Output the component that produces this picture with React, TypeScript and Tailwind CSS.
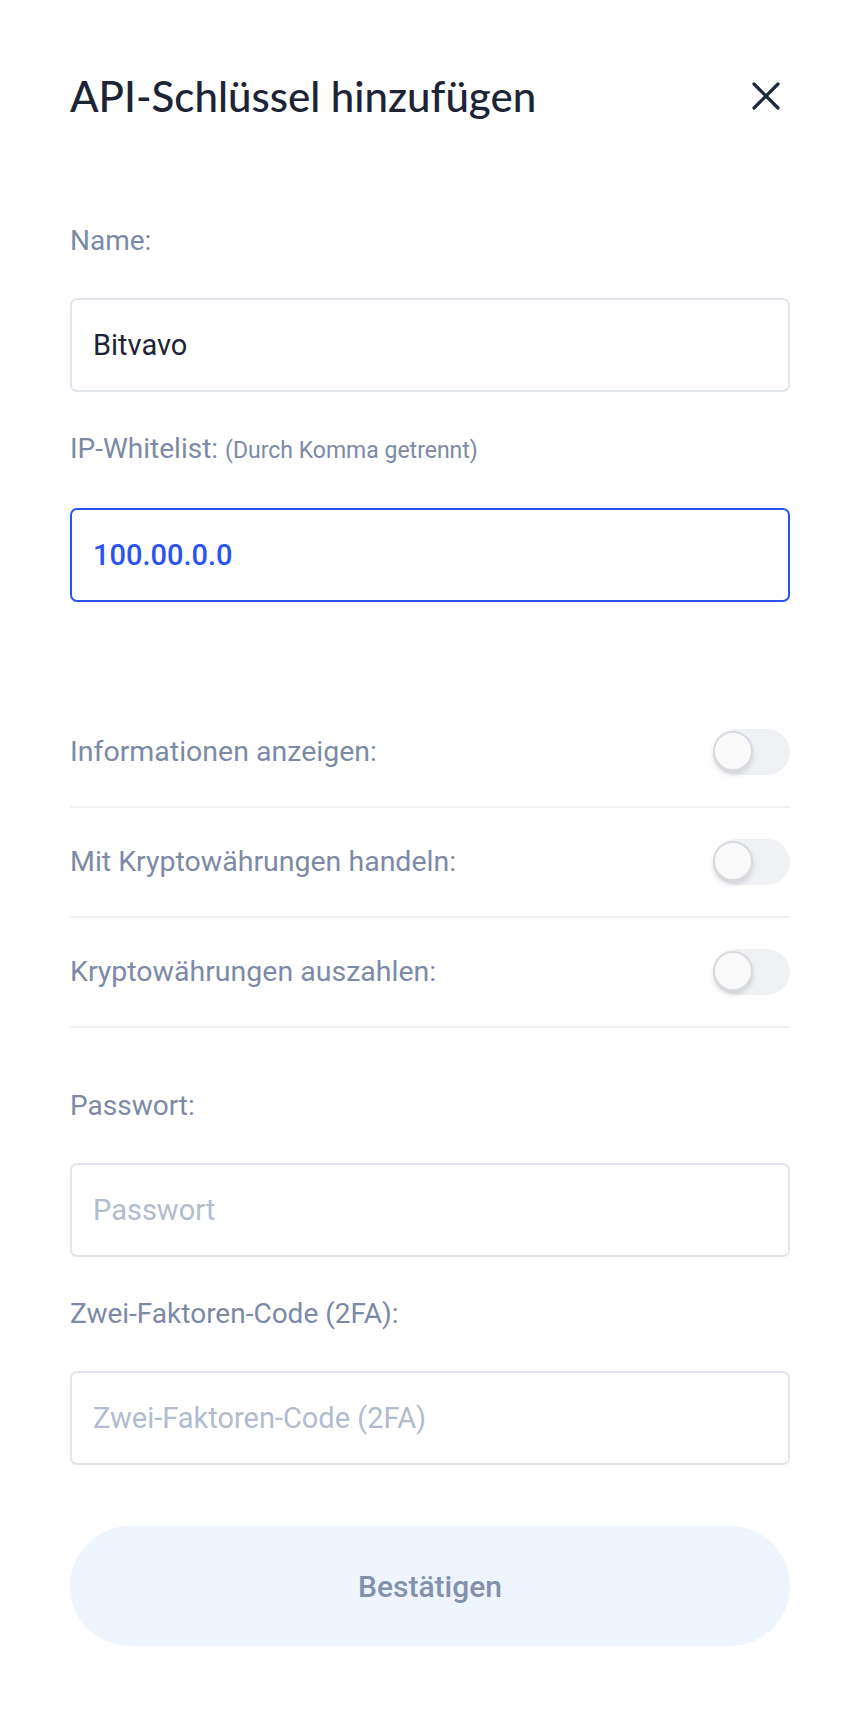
import React, { useState } from 'react';

const labelCls = 'block text-[28px] leading-[32px] text-[#7d8aa6]';
const inputBase =
  'w-full h-[94px] rounded-[7px] border-2 bg-white px-[21px] text-[29px] placeholder:text-[#b2bccf] outline-none';

const Toggle = ({ on, onChange }: { on: boolean; onChange: () => void }) => (
  <button
    type="button"
    onClick={onChange}
    className={`relative h-[46px] w-[77px] rounded-full ${on ? 'bg-[#2b53f0]' : 'bg-[#eff1f5]'}`}
  >
    <span
      className={`absolute top-[2px] h-[40px] w-[40px] rounded-full border-2 border-[#d9dbe0] bg-[#fafafa] shadow-[0_4px_5px_rgba(0,0,0,0.12)] ${
        on ? 'left-[36px]' : 'left-0'
      }`}
    />
  </button>
);

export default function App() {
  const [name, setName] = useState('Bitvavo');
  const [ips, setIps] = useState('100.00.0.0');
  const [perms, setPerms] = useState([false, false, false]);
  const rows = ['Informationen anzeigen:', 'Mit Kryptowährungen handeln:', 'Kryptowährungen auszahlen:'];

  return (
    <div className="min-h-[1718px] w-[860px] bg-white px-[70px] pt-[72px] font-['Roboto',sans-serif]">
      <div className="flex h-[48px] items-center justify-between">
        <h1 className="font-['Lato',sans-serif] text-[42px] font-medium text-[#1c2436]">API-Schlüssel hinzufügen</h1>
        <button type="button" className="mr-[10px] text-[#1e2a3b]">
          <svg width="28" height="28" viewBox="0 0 28 28" fill="none" stroke="currentColor" strokeWidth="3.2" strokeLinecap="round">
            <path d="M2 2L26 26M26 2L2 26" />
          </svg>
        </button>
      </div>

      <label className={`${labelCls} mt-[105px]`}>Name:</label>
      <input
        className={`${inputBase} mt-[41px] border-[#e1e5ec] text-[#1c2436]`}
        value={name}
        onChange={(e) => setName(e.target.value)}
      />

      <label className={`${labelCls} mt-[41px]`}>
        IP-Whitelist: <span className="text-[23px]">(Durch Komma getrennt)</span>
      </label>
      <input
        className={`${inputBase} mt-[41px] border-[#2b53f0] font-medium text-[#2b53f0]`}
        value={ips}
        onChange={(e) => setIps(e.target.value)}
      />

      <div className="mt-[96px]">
        {rows.map((r, i) => (
          <div key={r} className="flex h-[110px] items-center justify-between border-b-2 border-[#f0f2f6]">
            <span className="text-[28.5px] text-[#7d8aa6]">{r}</span>
            <Toggle on={perms[i]} onChange={() => setPerms(perms.map((p, j) => (j === i ? !p : p)))} />
          </div>
        ))}
      </div>

      <label className={`${labelCls} mt-[62px]`}>Passwort:</label>
      <input className={`${inputBase} mt-[41px] border-[#e1e5ec] text-[#1c2436]`} type="password" placeholder="Passwort" />

      <label className={`${labelCls} mt-[41px]`}>Zwei-Faktoren-Code (2FA):</label>
      <input className={`${inputBase} mt-[41px] border-[#e1e5ec] text-[#1c2436]`} placeholder="Zwei-Faktoren-Code (2FA)" />

      <button
        type="button"
        className="mt-[61px] h-[120px] w-full rounded-full bg-[#eff5fe] text-[30px] font-medium text-[#8391ad]"
      >
        Bestätigen
      </button>
    </div>
  );
}
